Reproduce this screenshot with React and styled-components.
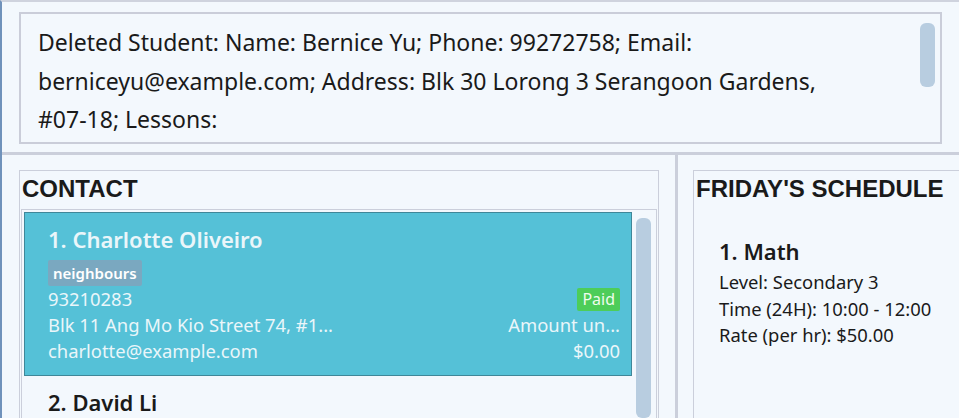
import React from "react";
import styled, { createGlobalStyle } from "styled-components";

const Global = createGlobalStyle`
  html, body { margin: 0; padding: 0; background: #f3f8fd; overflow: hidden; }
  * { box-sizing: border-box; }
`;

const UI = `"Noto Sans", "Open Sans", sans-serif`;
const HEAD = `"Liberation Sans", Arial, sans-serif`;

const Window = styled.div`
  width: 959px;
  height: 418px;
  display: flex;
  flex-direction: column;
  border-left: 2px solid #7092bb;
  border-top: 2px solid #cfd3de;
  background: #f3f8fd;
  overflow: hidden;
`;

const ResultPane = styled.div`
  padding: 10px 17px 8px 17px;
  border-bottom: 3px solid #cbcfdb;
`;

const ResultBox = styled.div`
  position: relative;
  height: 132px;
  border: 2px solid #cacdd9;
  padding: 9px 45px 0 17px;
  font-family: ${UI};
  font-size: 23px;
  line-height: 38.5px;
  color: #1a1a1a;
`;

const NoWrap = styled.span`
  white-space: nowrap;
`;

const Scroll = styled.div`
  position: absolute;
  right: ${(p) => p.$right}px;
  top: ${(p) => p.$top}px;
  width: 15px;
  height: ${(p) => p.$h}px;
  border-radius: 6px;
  background: #b8cde0;
`;

const Bottom = styled.div`
  flex: 1;
  display: flex;
  min-height: 0;
`;

const LeftCol = styled.div`
  width: 676px;
  padding: 15px 16px 0 17px;
  border-right: 3px solid #cbcfdb;
`;

const RightCol = styled.div`
  flex: 1;
  padding: 15px 0 0 15px;
`;

const Panel = styled.div`
  height: 100%;
  border: 1px solid #cbcfdb;
  border-bottom: none;
  ${(p) => p.$open && "border-right: none;"}
  display: flex;
  flex-direction: column;
`;

const Title = styled.div`
  font-family: ${HEAD};
  font-weight: 700;
  font-size: 24px;
  line-height: 28px;
  color: #1a1a1a;
  height: 39px;
  padding: 4px 0 0 2px;
  white-space: nowrap;
`;

const ListBox = styled.div`
  position: relative;
  flex: 1;
  margin: 0 1px 0 1px;
  border: 1px solid #cbcfdb;
  border-bottom: none;
  padding: 2px 24px 0 2px;
`;

const Card = styled.div`
  background: ${(p) => (p.$selected ? "#55c1d7" : "transparent")};
  border: ${(p) => (p.$selected ? "1px solid #3f8799" : "1px solid transparent")};
  height: ${(p) => (p.$selected ? "164px" : "auto")};
  padding: ${(p) => (p.$selected ? "11px" : "10px")} 11px 0 23px;
  font-family: ${UI};
  color: ${(p) => (p.$selected ? "#eaf6fa" : "#1a1a1a")};
`;

const Name = styled.div`
  font-family: ${UI};
  font-size: 22px;
  font-weight: 600;
  line-height: 30px;
`;

const Tag = styled.span`
  display: inline-block;
  background: #7aa8c0;
  color: #fff;
  font-weight: 600;
  font-size: 15px;
  line-height: 20px;
  padding: 3px 5px;
  border-radius: 2px;
  margin-top: 6px;
`;

const Row = styled.div`
  display: flex;
  justify-content: space-between;
  align-items: center;
  font-size: 18.4px;
  line-height: 26px;
  height: 26px;
`;

const Badge = styled.span`
  background: #4dcd59;
  color: #eefcee;
  font-size: 16px;
  line-height: 23px;
  padding: 0 5px;
  border-radius: 2px;
`;

const Lesson = styled.div`
  font-family: ${UI};
  color: #1a1a1a;
  padding: 26px 0 0 25px;
`;

const LessonName = styled(Name)`
  margin-bottom: 3px;
`;

const Detail = styled.div`
  font-size: 18.4px;
  line-height: 26.5px;
`;

export default function App() {
  return (
    <>
      <Global />
      <Window>
        <ResultPane>
          <ResultBox>
            Deleted Student: Name: Bernice Yu; Phone: 99272758; Email:
            berniceyu@example.com; Address: Blk 30 Lorong 3 Serangoon Gardens,{" "}
            <NoWrap>#07-18;</NoWrap> Lessons:
            <Scroll $right={5} $top={9} $h={64} />
          </ResultBox>
        </ResultPane>
        <Bottom>
          <LeftCol>
            <Panel>
              <Title>CONTACT</Title>
              <ListBox>
                <Card $selected>
                  <Name>1. Charlotte Oliveiro</Name>
                  <Tag>neighbours</Tag>
                  <Row>
                    <span>93210283</span>
                    <Badge>Paid</Badge>
                  </Row>
                  <Row>
                    <span>Blk 11 Ang Mo Kio Street 74, #1...</span>
                    <span>Amount un...</span>
                  </Row>
                  <Row>
                    <span>charlotte@example.com</span>
                    <span>$0.00</span>
                  </Row>
                </Card>
                <Card>
                  <Name>2. David Li</Name>
                </Card>
                <Scroll $right={5} $top={8} $h={200} />
              </ListBox>
            </Panel>
          </LeftCol>
          <RightCol>
            <Panel $open>
              <Title>FRIDAY'S SCHEDULE</Title>
              <Lesson>
                <LessonName>1. Math</LessonName>
                <Detail>Level: Secondary 3</Detail>
                <Detail>Time (24H): 10:00 - 12:00</Detail>
                <Detail>Rate (per hr): $50.00</Detail>
              </Lesson>
            </Panel>
          </RightCol>
        </Bottom>
      </Window>
    </>
  );
}
